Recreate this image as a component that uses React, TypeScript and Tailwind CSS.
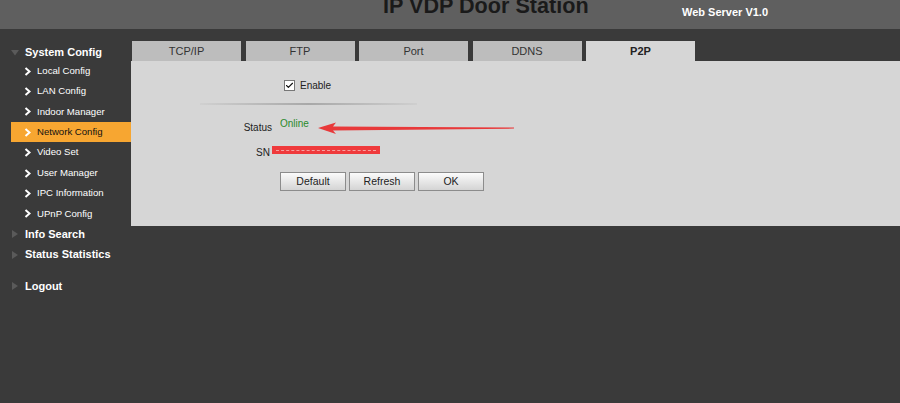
import { Check } from 'lucide-react';

const subItems = [
  'Local Config',
  'LAN Config',
  'Indoor Manager',
  'Network Config',
  'Video Set',
  'User Manager',
  'IPC Information',
  'UPnP Config',
];

const tabs = ['TCP/IP', 'FTP', 'Port', 'DDNS', 'P2P'];

function Chevron() {
  return (
    <svg width="7" height="9" viewBox="0 0 7 9" className="shrink-0">
      <polyline points="1.5,1 5.5,4.5 1.5,8" fill="none" stroke="#ffffff" strokeWidth="2" />
    </svg>
  );
}

function Triangle({ down }: { down?: boolean }) {
  return (
    <svg width="8" height="8" viewBox="0 0 8 8" className="shrink-0">
      {down ? (
        <polygon points="0,1.5 8,1.5 4,7" fill="#5a5a5a" />
      ) : (
        <polygon points="1,0 7,4 1,8" fill="#5a5a5a" />
      )}
    </svg>
  );
}

function Sidebar() {
  const active = 'Network Config';
  return (
    <div className="w-[131px] shrink-0 pt-[11.5px] text-white">
      <div className="flex h-[20.4px] translate-y-[1.5px] items-center pl-[11px]">
        <Triangle down />
        <span className="ml-[6px] text-[11px] font-bold">System Config</span>
      </div>
      {subItems.map(item => (
        <div
          key={item}
          className={
            item === active
              ? 'ml-[11px] flex h-[20.4px] items-center bg-[#f7a631] pl-[13px] text-[#111]'
              : 'ml-[11px] flex h-[20.4px] items-center pl-[13px]'
          }
        >
          <Chevron />
          <span className="ml-[6px] text-[9.6px]">{item}</span>
        </div>
      ))}
      <div className="flex h-[20.4px] items-center pl-[11px]">
        <Triangle />
        <span className="ml-[6px] text-[11px] font-bold">Info Search</span>
      </div>
      <div className="flex h-[20.4px] items-center pl-[11px]">
        <Triangle />
        <span className="ml-[6px] text-[11px] font-bold">Status Statistics</span>
      </div>
      <div className="mt-[11.5px] flex h-[20.4px] items-center pl-[11px]">
        <Triangle />
        <span className="ml-[6px] text-[11px] font-bold">Logout</span>
      </div>
    </div>
  );
}

function FormButton({ label, width }: { label: string; width: string }) {
  return (
    <button
      className={`${width} h-[19px] border border-[#8c8c8c] bg-gradient-to-b from-[#fbfbfb] to-[#d4d4d4] text-[10.5px] text-[#222]`}
    >
      {label}
    </button>
  );
}

function P2PPanel() {
  return (
    <div className="relative h-[165px] bg-[#d6d6d6] pl-[69px] pt-[19px] text-[10px] text-[#222]">
      {/* enable checkbox */}
      <div className="flex h-[11px] items-center pl-[84px]">
        <div className="flex h-[11px] w-[11px] items-center justify-center border border-[#777] bg-white">
          <Check className="h-[9px] w-[9px] text-[#111]" strokeWidth={3} />
        </div>
        <span className="ml-[5px]">Enable</span>
      </div>

      <div className="mt-[12px] h-[2px] w-[217px] bg-gradient-to-r from-[#d0d0d0] via-[#a8a8a8] to-[#cfcfcf]" />

      {/* status row */}
      <div className="mt-[14px] flex h-[14px] items-center">
        <span className="w-[72px] pt-[3px] text-right">Status</span>
        <span className="ml-[8px] -mt-[5px] text-[#2a8a2a]">Online</span>
      </div>

      {/* serial number row, value hidden */}
      <div className="relative mt-[13px] flex h-[14px] items-end">
        <span className="w-[72px] pr-[2px] text-right">SN</span>
        <div className="absolute left-[72px] top-0 flex h-[8px] w-[108px] items-center bg-[#ef3a3c] px-[4px]">
          <div className="h-[1px] w-full border-t border-dashed border-[#f6a0a0]" />
        </div>
      </div>

      <div className="ml-[80px] mt-[12px] flex gap-[3px]">
        <FormButton label="Default" width="w-[66px]" />
        <FormButton label="Refresh" width="w-[66px]" />
        <FormButton label="OK" width="w-[66px]" />
      </div>

      {/* red marker arrow pointing at the status */}
      <svg
        className="absolute left-[185px] top-[60px]"
        width="200"
        height="14"
        viewBox="0 0 200 14"
      >
        <polygon points="2,7 20,1.5 17,5.5 198,6.6 198,7.6 17,9.5 20,13" fill="#e8393a" />
      </svg>
    </div>
  );
}

export default function App() {
  return (
    <div className="h-[403px] w-[900px] overflow-hidden bg-[#3a3a3a] font-['Liberation_Sans',Arial,sans-serif]">
      <header className="relative h-[29px] bg-[#5f5f5f]">
        <h1 className="absolute left-[383px] top-[-9px] text-[21.6px] leading-[30px] font-bold text-[#1a1a1a]">
          IP VDP Door Station
        </h1>
        <span className="absolute left-[682px] top-[4px] text-[11px] font-bold text-white">
          Web Server V1.0
        </span>
      </header>

      <div className="flex">
        <Sidebar />
        <main className="flex-1 pt-[12px]">
          <div className="flex gap-[4.5px] pl-[1px]">
            {tabs.map(tab => (
              <div
                key={tab}
                className={
                  tab === 'P2P'
                    ? 'flex h-[20px] w-[109px] items-center justify-center bg-[#d6d6d6] text-[11px] font-bold text-[#222]'
                    : 'flex h-[20px] w-[109px] items-center justify-center bg-[#bdbdbd] text-[11px] text-[#333]'
                }
              >
                {tab}
              </div>
            ))}
          </div>
          <P2PPanel />
        </main>
      </div>
    </div>
  );
}
